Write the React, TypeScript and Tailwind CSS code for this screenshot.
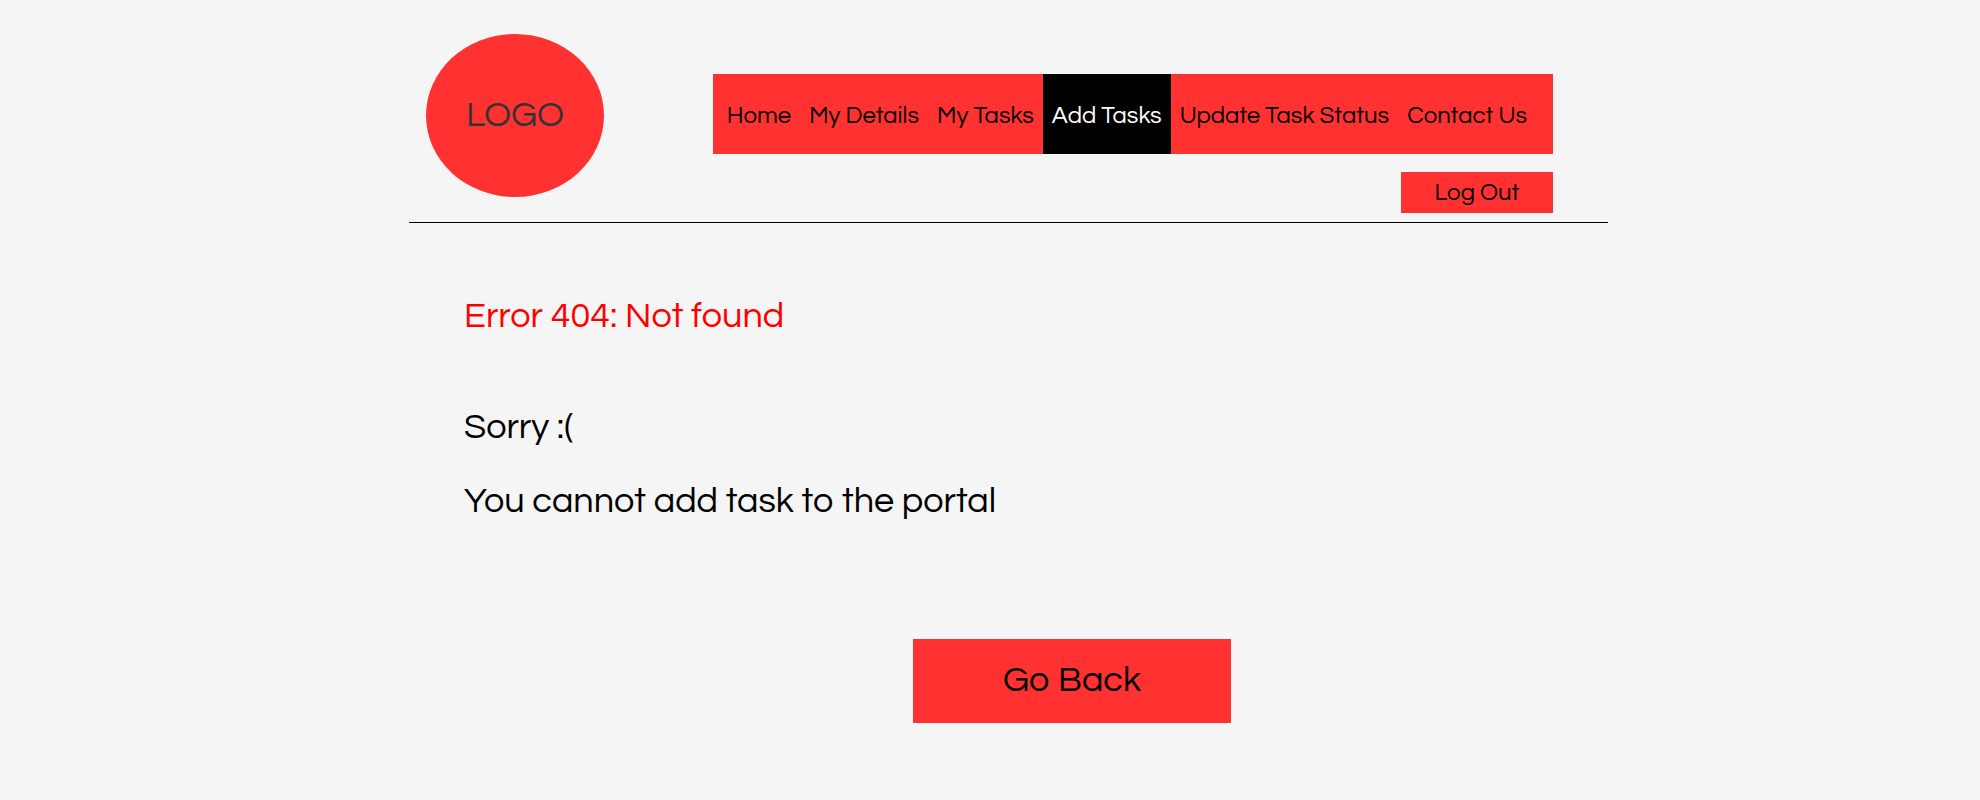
type NavItem = { label: string; href: string };

const navItems: NavItem[] = [
  { label: "Home", href: "#home" },
  { label: "My Details", href: "#my-details" },
  { label: "My Tasks", href: "#my-tasks" },
  { label: "Add Tasks", href: "#add-tasks" },
  { label: "Update Task Status", href: "#update-task-status" },
  { label: "Contact Us", href: "#contact-us" },
];

const activeLabel = "Add Tasks";

function Logo() {
  return (
    <a
      href="#home"
      className="flex h-[163px] w-[178px] shrink-0 items-center justify-center rounded-[50%] bg-[#ff3131] text-[36px] leading-[37px] text-[#333333]"
    >
      LOGO
    </a>
  );
}

function NavBar() {
  return (
    <nav aria-label="Main" className="flex h-20 bg-[#ff3131] pr-[17px] pl-[5px] text-2xl">
      {navItems.map(({ label, href }) => (
        <a
          key={label}
          href={href}
          aria-current={label === activeLabel ? "page" : undefined}
          className={
            label === activeLabel
              ? "flex items-center whitespace-nowrap bg-black px-[9px] pt-1 text-white"
              : "flex items-center whitespace-nowrap px-[9px] pt-1"
          }
        >
          {label}
        </a>
      ))}
    </nav>
  );
}

export default function App() {
  return (
    <div className="min-h-screen bg-[#f5f5f5] pl-[37px] font-['Questrial','Inter',sans-serif] text-black">
      <div className="mx-auto max-w-[1199px]">
        <header className="flex justify-between border-b border-black pt-[34px] pr-[55px] pb-[9px] pl-[17px]">
          <Logo />
          <div className="flex flex-col items-end gap-[18px] pt-10">
            <NavBar />
            <button
              type="button"
              className="h-[41px] w-[152px] bg-[#ff3131] text-2xl"
            >
              Log Out
            </button>
          </div>
        </header>

        <main className="px-[55px] pt-[75px] text-[36px] leading-[37px]">
          <h1 className="text-[#ff0000]">Error 404: Not found</h1>
          <p className="mt-[74px]">Sorry :(</p>
          <p className="mt-[37px]">You cannot add task to the portal</p>
          <div className="flex justify-center pt-[119px] pl-[127px]">
            <button type="button" className="h-[84px] w-[318px] bg-[#ff3131] pb-0.5">
              Go Back
            </button>
          </div>
        </main>
      </div>
    </div>
  );
}
